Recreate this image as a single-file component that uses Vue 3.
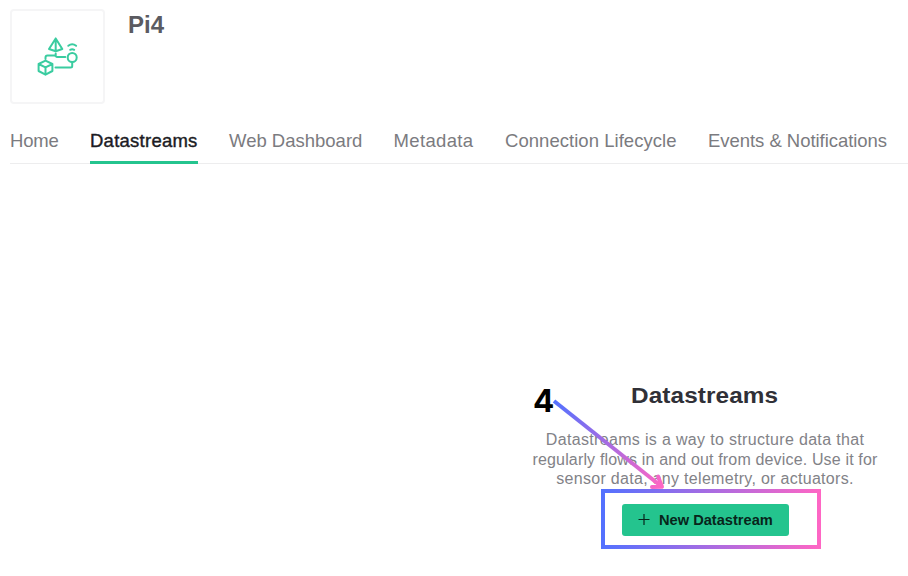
<script setup>
const tabs = [
  { label: 'Home', id: 'home' },
  { label: 'Datastreams', id: 'datastreams', active: true },
  { label: 'Web Dashboard', id: 'web' },
  { label: 'Metadata', id: 'metadata' },
  { label: 'Connection Lifecycle', id: 'connection' },
  { label: 'Events & Notifications', id: 'events' },
]
</script>

<template>
  <div class="page">
    <header class="header">
      <div class="thumb">
        <svg class="logo" width="42" height="40" viewBox="0 0 42 40" fill="none" stroke="#3acca0" stroke-width="2" stroke-linecap="round" stroke-linejoin="round">
          <path d="M18.700 1.500 12 12l6.700 2.200L25.300 12zM18.700 1.500v12.700" />
          <path d="M18.700 16.500v2.300M8.500 22v-1.500q0-2 2-2h6.500q1.700 0 2 .8t1.500.8H28.300" />
          <circle cx="35.200" cy="20.500" r="4.500" />
          <path d="M31.300 8.800q3.900-3.200 7.800 0M33.200 12.800q2-1.200 4 0" />
          <path d="M35.200 25v4q0 1.500-1.500 1.500H18.500" />
          <path d="M8.500 23.700l6.900 3.300v7l-6.900 3.700-6.900-3.700v-7zM1.600 27l6.900 3.300 6.900-3.300M8.500 30.300v7.400" />
        </svg>
      </div>
      <h1 class="title">Pi4</h1>
    </header>

    <nav class="tabs">
      <a v-for="tab in tabs" :key="tab.id" class="tab" :class="[tab.id, { active: tab.active }]">{{ tab.label }}</a>
    </nav>

    <main class="content">
      <section class="empty">
        <h2 class="heading">Datastreams</h2>
        <p class="description">
          <span class="line first">Datastreams is a way to structure data that</span>
          <span class="line second">regularly flows in and out from device. Use it for</span>
          <span class="line third">sensor data, any telemetry, or actuators.</span>
        </p>
        <button class="create">
          <svg width="12" height="12" viewBox="0 0 12 12" stroke="#08251b" stroke-width="1.200"><path d="M.5 5.500h11M6 0v11" /></svg>
          <span class="create-label">New Datastream</span>
        </button>
      </section>
    </main>

    <span class="step">4</span>
    <svg class="annotation" width="908" height="576" viewBox="0 0 908 576" fill="none">
      <defs>
        <linearGradient id="arrowFill" gradientUnits="userSpaceOnUse" x1="554" y1="401" x2="662" y2="487">
          <stop stop-color="#5271ff" /><stop offset="1" stop-color="#ff66c4" />
        </linearGradient>
        <linearGradient id="frameFill" gradientUnits="userSpaceOnUse" x1="601" y1="0" x2="821" y2="0">
          <stop stop-color="#5271ff" /><stop offset="1" stop-color="#ff66c4" />
        </linearGradient>
      </defs>
      <path d="M554 401 661.500 486.500" stroke="url(#arrowFill)" stroke-width="4" />
      <path d="M658 476.500 662 486.800 652 487" stroke="url(#arrowFill)" stroke-width="4" stroke-linecap="round" stroke-linejoin="round" />
      <rect x="603" y="491" width="216" height="56" stroke="url(#frameFill)" stroke-width="4" />
    </svg>
  </div>
</template>

<style>
body { background: #fff; }
</style>

<style scoped>
.page {
  position: relative;
  box-sizing: border-box;
  width: 908px;
  height: 576px;
  padding: 9px 0 0 10px;
  overflow: hidden;
  background: #fff;
  font-family: "Liberation Sans", Arial, sans-serif;
}
.header { display: flex; gap: 23px; height: 95px; }
.thumb {
  box-sizing: border-box;
  display: flex;
  align-items: center;
  justify-content: center;
  width: 95px;
  height: 95px;
  border: 2px solid #f5f5f6;
  border-radius: 4px;
}
.logo { display: block; }
.title { margin: 2px 0 0; font-size: 24px; line-height: 28px; font-weight: 700; color: #5b5b61; }
.tabs {
  display: flex;
  gap: 31.500px;
  height: 43px;
  margin-top: 17px;
  box-shadow: inset 0 -1px #ededee;
}
.tab {
  box-sizing: border-box;
  flex: none;
  height: 43px;
  padding-top: 8px;
  font-size: 18.500px;
  line-height: 24px;
  white-space: nowrap;
  color: #7b7b80;
}
.active { color: #1c1c24; border-bottom: 3px solid #24c48e; -webkit-text-stroke: 0.400px #1c1c24; }
.home { width: 48.500px; letter-spacing: -0.150px; }
.datastreams { width: 107.500px; letter-spacing: 0.250px; }
.web { width: 133px; }
.metadata { width: 80px; letter-spacing: 0.350px; }
.connection { width: 171.500px; letter-spacing: 0.040px; }
.events { width: 180px; letter-spacing: -0.040px; }
.content { display: flex; justify-content: flex-end; padding-top: 217px; }
.empty { display: flex; flex-direction: column; align-items: center; width: 406px; }
.heading { margin: 0; font-size: 22px; line-height: 30px; font-weight: 700; letter-spacing: 0.100px; color: #303037; transform: scaleX(1.105); }
.description { margin: 19px 0 0; font-size: 16px; line-height: 19.700px; color: #828287; text-align: center; }
.line { display: block; white-space: nowrap; }
.first { letter-spacing: 0.330px; }
.second { letter-spacing: 0.160px; }
.third { letter-spacing: 0.300px; }
.create {
  display: flex;
  align-items: center;
  gap: 9px;
  box-sizing: border-box;
  width: 167px;
  height: 32px;
  margin: 15px 0 0;
  padding: 0 0 0 16px;
  border: 0;
  border-radius: 3px;
  background: #24c48e;
  color: #08251b;
  font: 700 14px "Liberation Sans", Arial, sans-serif;
  white-space: nowrap;
}
.create-label { transform: scaleX(1.045); transform-origin: left; }
.step { position: absolute; left: 533px; top: 381px; font: 700 31.500px/40px Inter, sans-serif; color: #000; }
.annotation { position: absolute; left: 0; top: 0; pointer-events: none; }
</style>
